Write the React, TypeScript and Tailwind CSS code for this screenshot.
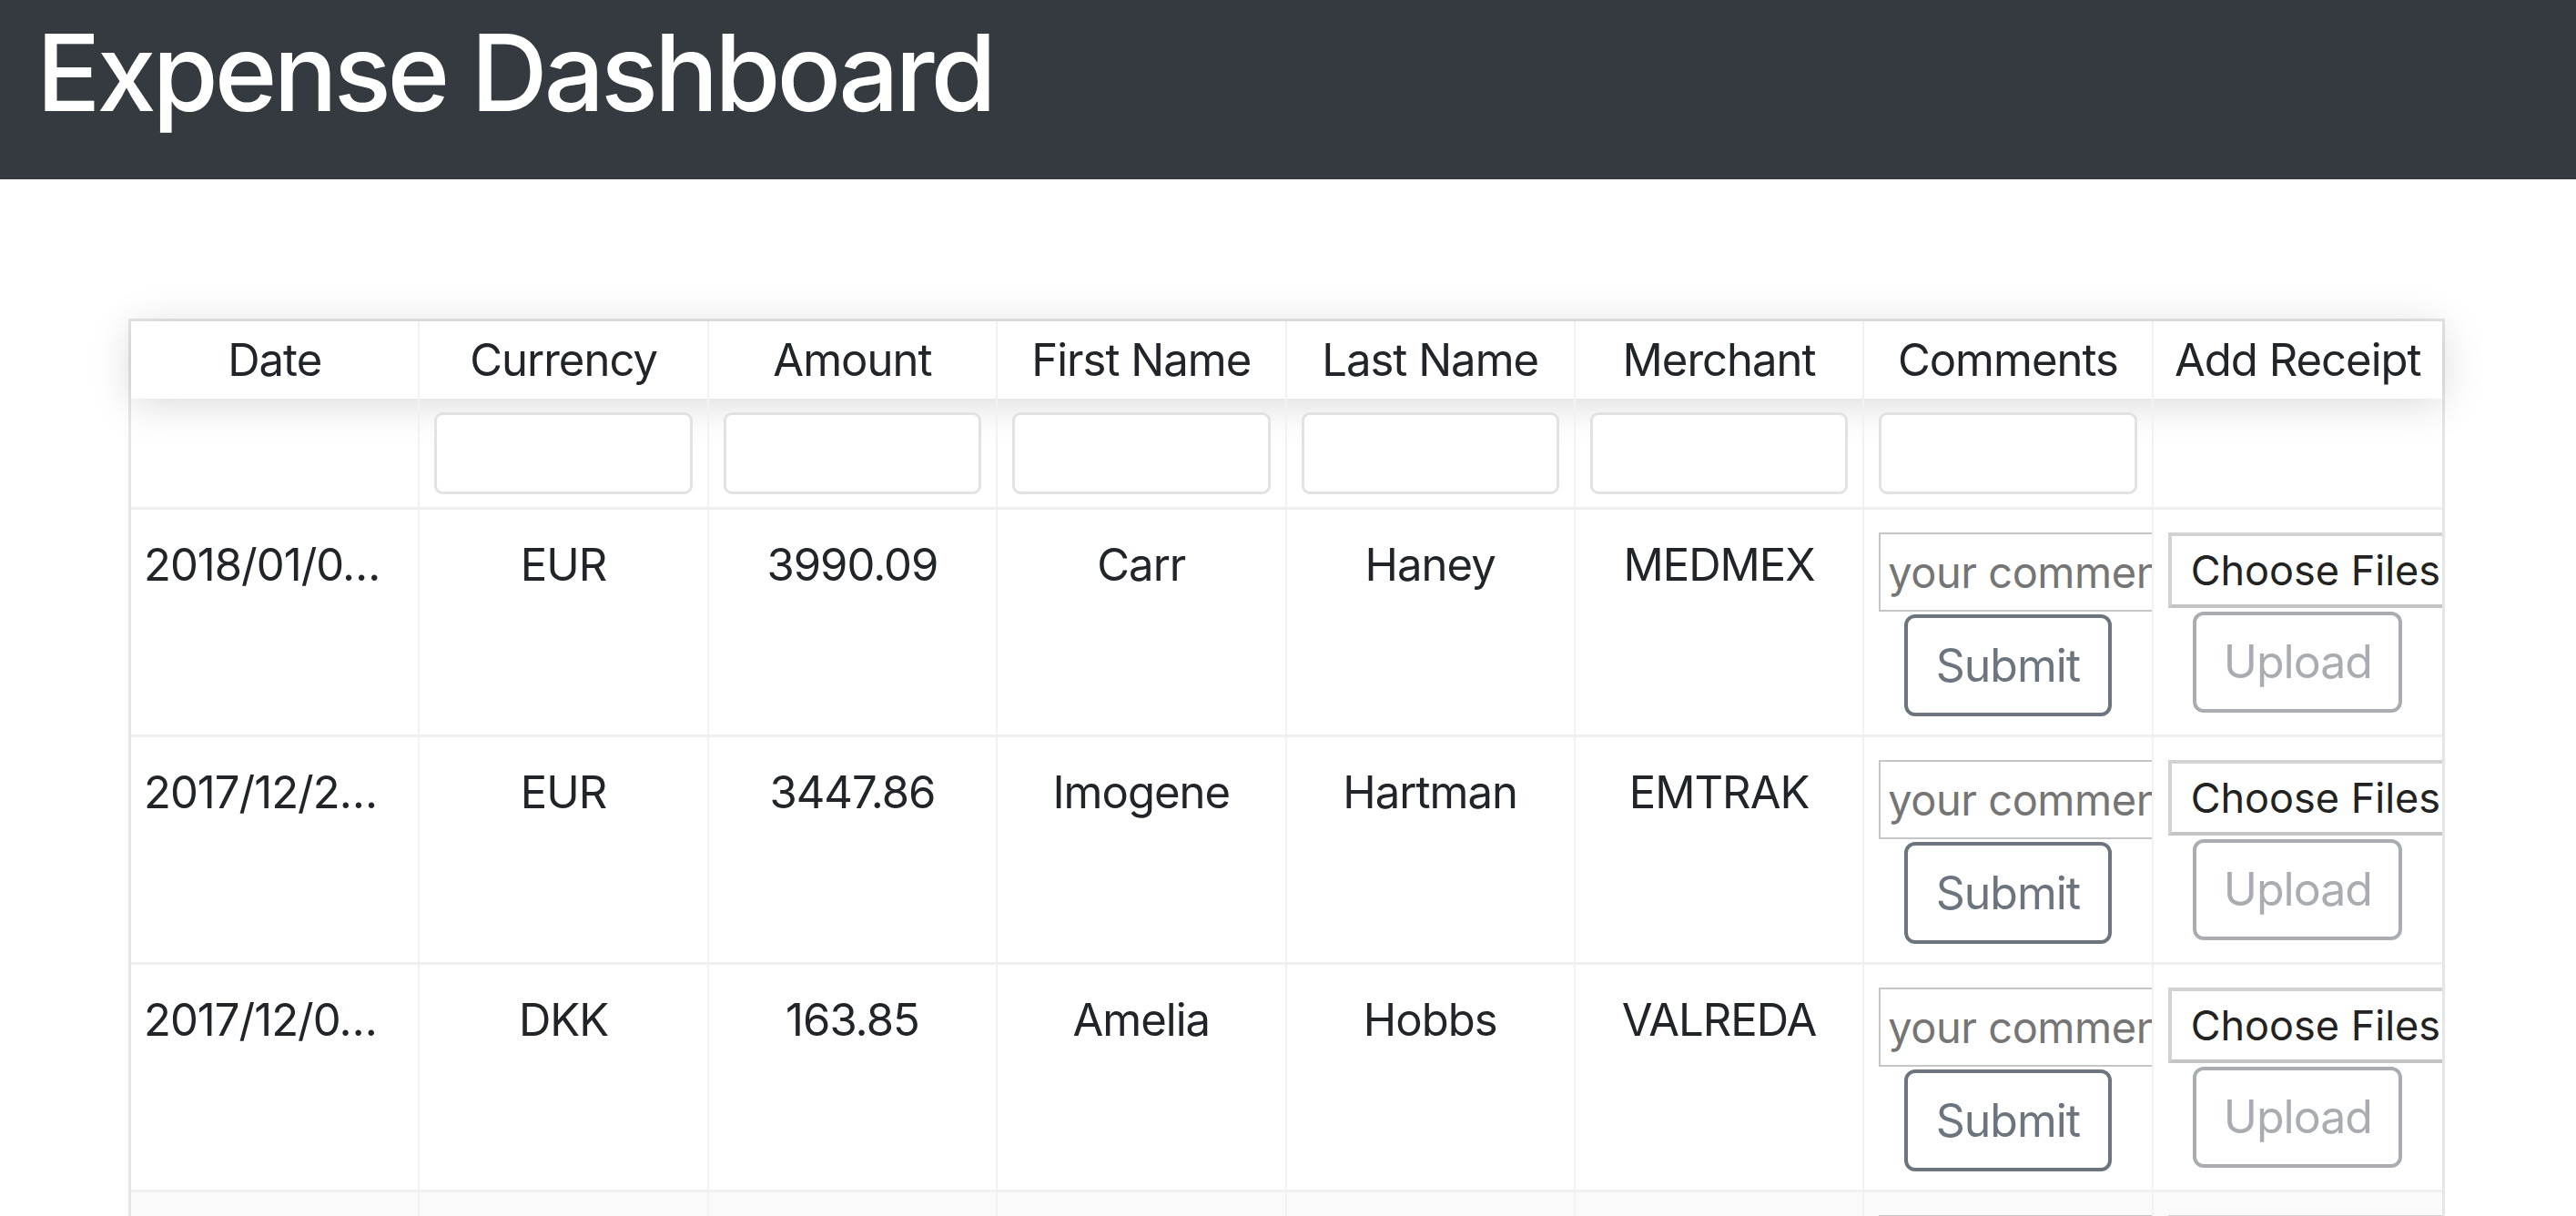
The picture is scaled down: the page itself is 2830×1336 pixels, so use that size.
import React from "react";

const COLUMNS = [
  "Date",
  "Currency",
  "Amount",
  "First Name",
  "Last Name",
  "Merchant",
  "Comments",
  "Add Receipt",
];

type Expense = {
  date: string;
  currency: string;
  amount: string;
  first: string;
  last: string;
  merchant: string;
};

const EXPENSES: Expense[] = [
  { date: "2018/01/0…", currency: "EUR", amount: "3990.09", first: "Carr", last: "Haney", merchant: "MEDMEX" },
  { date: "2017/12/2…", currency: "EUR", amount: "3447.86", first: "Imogene", last: "Hartman", merchant: "EMTRAK" },
  { date: "2017/12/0…", currency: "DKK", amount: "163.85", first: "Amelia", last: "Hobbs", merchant: "VALREDA" },
];

const cell = "border-r-2 border-[#f2f2f2] last:border-r-0";
const textCell = `${cell} overflow-hidden pt-[25px] text-[49px] leading-[72px] tracking-[-0.02em]`;

// row that only peeks in at the bottom of the viewport
function PartialRow() {
  return (
    <div className="grid grid-cols-8 h-[250px] bg-[#fafafa]">
      {[0, 1, 2, 3, 4, 5].map((i) => (
        <div key={i} className={cell} />
      ))}
      <div className={`${cell} overflow-hidden px-[16px] pt-[25px]`}>
        <div className="w-[330px] h-[87px] border-2 border-[#c6c6c6] bg-white" />
      </div>
      <div className={`${cell} overflow-hidden px-[16px] pt-[25px]`}>
        <div className="w-[360px] h-[83px] border-4 border-[#d2d2d2] bg-white" />
      </div>
    </div>
  );
}

function ExpenseRow({ expense }: { expense: Expense }) {
  const values = [expense.currency, expense.amount, expense.first, expense.last, expense.merchant];
  return (
    <div className="grid grid-cols-8 h-[250px] border-b-[3px] border-[#f0f0f0]">
      <div className={`${textCell} px-[14px] text-left`}>{expense.date}</div>
      {values.map((v, i) => (
        <div key={i} className={`${textCell} px-[16px] text-center`}>
          {v}
        </div>
      ))}
      <div className={`${cell} overflow-hidden px-[16px] pt-[25px] flex flex-col items-center`}>
        <input
          type="text"
          placeholder="your comment"
          className="self-start shrink-0 w-[330px] h-[87px] border-2 border-[#c6c6c6] bg-white pl-[8px] text-[47px] tracking-[-0.01em] text-[#212529] placeholder:text-[#757575] outline-none"
        />
        <button className="mt-[3px] w-[228px] h-[112px] shrink-0 rounded-[12px] border-4 border-[#6c757d] bg-white text-[50px] tracking-[-0.02em] text-[#6c757d]">
          Submit
        </button>
      </div>
      <div className={`${cell} overflow-hidden px-[16px] pt-[25px] flex flex-col items-center`}>
        <div className="self-start shrink-0 flex items-center w-[360px] h-[83px] border-4 border-[#d2d2d2] border-b-[#c4c4c4] bg-white pl-[21px] text-[45px] text-[#222222] whitespace-nowrap">
          Choose Files
        </div>
        <button
          disabled
          className="mt-[4px] w-[230px] h-[111px] shrink-0 rounded-[12px] border-4 border-[#a9adb2] bg-white text-[50px] tracking-[-0.02em] text-[#a9adb2]"
        >
          Upload
        </button>
      </div>
    </div>
  );
}

export default function App() {
  return (
    <div className="min-h-screen bg-white font-['Inter','Noto_Sans',sans-serif] text-[#212529]">
      <header className="h-[197px] bg-[#343a40] pl-[40px] pt-[21px]">
        <h1 className="text-[117px] font-medium leading-none tracking-[-0.035em] text-white">
          Expense Dashboard
        </h1>
      </header>

      <main className="pt-[153px] pl-[141px]">
        <div className="w-[2545px] border-[3px] border-b-0 border-[#e6e6e6]">
          <div className="grid grid-cols-8 h-[85px] bg-white shadow-[0_6px_45px_0_rgba(0,0,0,0.15)]">
            {COLUMNS.map((col) => (
              <div key={col} className={`${cell} text-center text-[49px] leading-[85px] tracking-[-0.02em]`}>
                {col}
              </div>
            ))}
          </div>

          <div className="grid grid-cols-8 h-[122px] border-b-[3px] border-[#efefef]">
            {COLUMNS.map((col, i) => (
              <div key={col} className={`${cell} px-[16px] pt-[15px]`}>
                {i > 0 && i < 7 && (
                  <input
                    type="text"
                    className="w-full h-[90px] rounded-[9px] border-[3px] border-[#e2e2e2] bg-white outline-none"
                  />
                )}
              </div>
            ))}
          </div>

          {EXPENSES.map((e) => (
            <ExpenseRow key={e.merchant} expense={e} />
          ))}
          <PartialRow />
        </div>
      </main>
    </div>
  );
}
